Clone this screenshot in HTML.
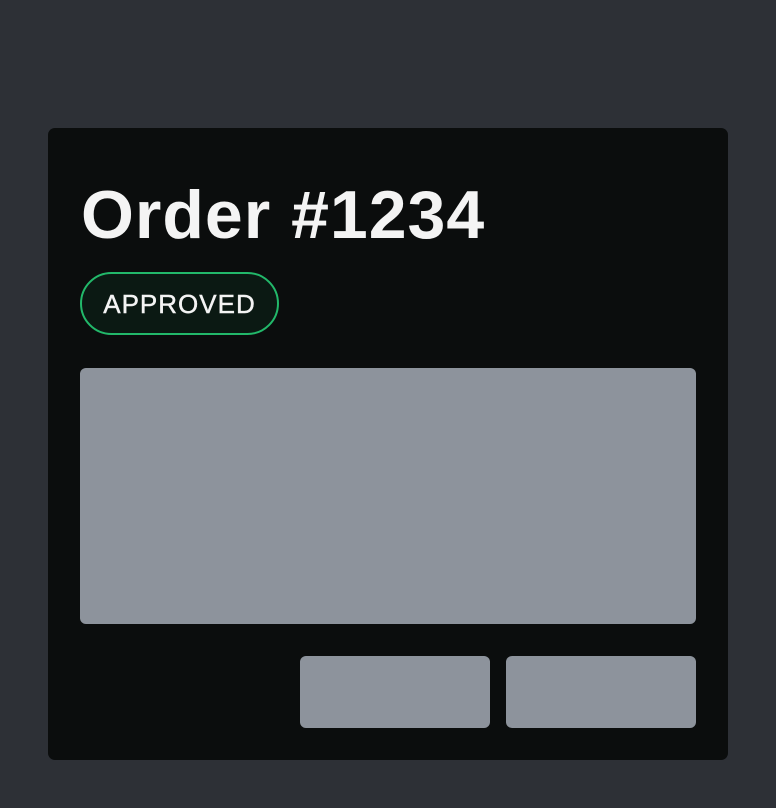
<!DOCTYPE html>
<html><head><meta charset="utf-8"><style>
html,body{margin:0;padding:0;background:#2d3036;width:776px;height:808px;overflow:hidden;font-family:"Liberation Sans",sans-serif}
.card{position:absolute;left:48px;top:128px;width:680px;height:632px;background:#0b0d0d;border-radius:7px}
h1{position:absolute;left:81px;top:175px;margin:0;font-size:68px;line-height:80px;font-weight:bold;color:#f4f4f4;letter-spacing:1px;white-space:nowrap}
.badge{position:absolute;left:80px;top:272px;width:195px;height:59px;border:2px solid #22b86a;border-radius:32px;background:#0b1913;color:#f4f4f4;font-size:26px;letter-spacing:1px;line-height:61px;text-align:center;-webkit-text-stroke:0.4px #f4f4f4}
.box{position:absolute;background:#8d939c;border-radius:6px}
</style></head><body>
<div class="card"></div>
<h1>Order #1234</h1>
<div class="badge">APPROVED</div>
<div class="box" style="left:80px;top:368px;width:616px;height:256px"></div>
<div class="box" style="left:300px;top:656px;width:190px;height:72px"></div>
<div class="box" style="left:506px;top:656px;width:190px;height:72px"></div>
</body></html>
